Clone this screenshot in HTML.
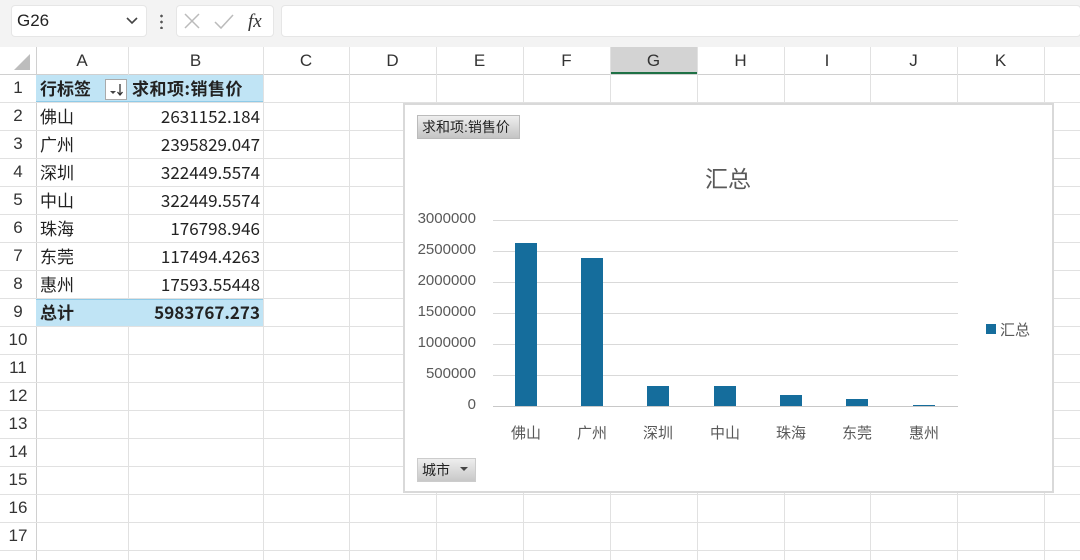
<!DOCTYPE html>
<html><head><meta charset="utf-8"><style>
*{margin:0;padding:0;box-sizing:border-box}
body{width:1080px;height:560px;overflow:hidden;background:#fff;font-family:"Liberation Sans","Noto Sans CJK SC",sans-serif;position:relative}
.a{position:absolute}
.vl{position:absolute;top:47px;bottom:0;width:1px;background:#e1e1e1}
.hl{position:absolute;left:0;right:0;height:1px;background:#e1e1e1}
.ch{position:absolute;top:47px;height:27px;font-size:17px;color:#333;text-align:center;line-height:27px}
.rn{position:absolute;left:0;width:36px;font-size:17px;color:#333;text-align:center;height:28px;line-height:28px}
.c{position:absolute;font-size:17px;color:#222;height:28px;line-height:28px;font-family:"Noto Sans CJK SC","Liberation Sans",sans-serif}
.yl{position:absolute;left:405px;width:71px;text-align:right;font-size:15px;color:#595959}
.xl{position:absolute;top:422px;width:60px;text-align:center;font-size:15px;color:#595959}
.bar{position:absolute;width:22px;background:#156d9c;bottom:154px}
.gl{position:absolute;left:493px;width:465px;height:1px;background:#d9d9d9}
</style></head><body>
<div class="a" style="left:0;top:0;width:1080px;height:47px;background:#f3f3f3"></div>
<div class="a" style="left:11px;top:5px;width:136px;height:32px;background:#fff;border-radius:4px;border:1px solid #e6e6e6"></div>
<div class="a" style="left:17px;top:11px;font-size:17px;color:#222">G26</div>
<svg class="a" style="left:125px;top:15px" width="14" height="10"><path d="M2 3l5 5 5-5" stroke="#444" stroke-width="1.6" fill="none"/></svg>
<div class="a" style="left:160px;top:13px;width:3px;height:16px;background:radial-gradient(circle,#555 1.2px,transparent 1.5px) 0 0/3px 6px"></div>
<div class="a" style="left:176px;top:5px;width:98px;height:32px;background:#fff;border-radius:4px;border:1px solid #e6e6e6"></div>
<svg class="a" style="left:183px;top:12px" width="90" height="20"><path d="M2 2l14 14M16 2L2 16" stroke="#bbb" stroke-width="1.5"/><path d="M32 10l6 6 12-13" stroke="#bbb" stroke-width="1.5" fill="none"/><text x="65" y="15" font-family="Liberation Serif" font-style="italic" font-size="19" fill="#333">fx</text></svg>
<div class="a" style="left:281px;top:5px;width:800px;height:32px;background:#fff;border-radius:4px;border:1px solid #e6e6e6"></div>
<div class="a" style="left:0;top:47px;width:1080px;height:27px;background:#fff"></div>
<div class="a" style="left:610px;top:47px;width:87px;height:27px;background:#d3d3d3;border-bottom:2px solid #1e7145"></div>
<svg class="a" style="left:10px;top:52px" width="22" height="20"><path d="M20 2V18H4Z" fill="#bdbdbd"/></svg>
<div class="hl" style="top:74px;background:#d0d0d0"></div>
<div class="vl" style="left:36px;background:#d0d0d0"></div>
<div class="vl" style="left:128px"></div><div class="vl" style="left:263px"></div><div class="vl" style="left:349px"></div><div class="vl" style="left:436px"></div><div class="vl" style="left:523px"></div><div class="vl" style="left:610px"></div><div class="vl" style="left:697px"></div><div class="vl" style="left:784px"></div><div class="vl" style="left:870px"></div><div class="vl" style="left:957px"></div><div class="vl" style="left:1044px"></div>
<div class="hl" style="top:102px"></div><div class="hl" style="top:130px"></div><div class="hl" style="top:158px"></div><div class="hl" style="top:186px"></div><div class="hl" style="top:214px"></div><div class="hl" style="top:242px"></div><div class="hl" style="top:270px"></div><div class="hl" style="top:298px"></div><div class="hl" style="top:326px"></div><div class="hl" style="top:354px"></div><div class="hl" style="top:382px"></div><div class="hl" style="top:410px"></div><div class="hl" style="top:438px"></div><div class="hl" style="top:466px"></div><div class="hl" style="top:494px"></div><div class="hl" style="top:522px"></div><div class="hl" style="top:550px"></div>
<div class="ch" style="left:36px;width:92px">A</div><div class="ch" style="left:128px;width:135px">B</div><div class="ch" style="left:263px;width:86px">C</div><div class="ch" style="left:349px;width:87px">D</div><div class="ch" style="left:436px;width:87px">E</div><div class="ch" style="left:523px;width:87px">F</div><div class="ch" style="left:610px;width:87px">G</div><div class="ch" style="left:697px;width:87px">H</div><div class="ch" style="left:784px;width:86px">I</div><div class="ch" style="left:870px;width:87px">J</div><div class="ch" style="left:957px;width:87px">K</div>
<div class="a" style="left:36px;top:75px;width:227px;height:27px;background:#c0e4f5;border-bottom:1px solid #8fcbe8"></div>
<div class="a" style="left:36px;top:299px;width:227px;height:27px;background:#c0e4f5;border-top:1px solid #8fcbe8"></div>
<div class="rn" style="top:74px">1</div><div class="rn" style="top:102px">2</div><div class="rn" style="top:130px">3</div><div class="rn" style="top:158px">4</div><div class="rn" style="top:186px">5</div><div class="rn" style="top:214px">6</div><div class="rn" style="top:242px">7</div><div class="rn" style="top:270px">8</div><div class="rn" style="top:298px">9</div><div class="rn" style="top:326px">10</div><div class="rn" style="top:354px">11</div><div class="rn" style="top:382px">12</div><div class="rn" style="top:410px">13</div><div class="rn" style="top:438px">14</div><div class="rn" style="top:466px">15</div><div class="rn" style="top:494px">16</div><div class="rn" style="top:522px">17</div>
<div class="c" style="left:40px;top:74px;font-weight:bold">行标签</div>
<svg class="a" style="left:105px;top:79px" width="22" height="21"><rect x="0.5" y="0.5" width="21" height="20" fill="#fff" stroke="#aaa"/><path d="M5 12h6l-3 3z" fill="#444"/><path d="M15 5v11M12.5 13l2.5 3 2.5-3" stroke="#333" stroke-width="1.3" fill="none"/></svg>
<div class="c" style="left:132px;top:74px;font-weight:bold;letter-spacing:0.5px">求和项:销售价</div>
<div class="c" style="left:40px;top:102px">佛山</div><div class="c" style="left:40px;top:130px">广州</div><div class="c" style="left:40px;top:158px">深圳</div><div class="c" style="left:40px;top:186px">中山</div><div class="c" style="left:40px;top:214px">珠海</div><div class="c" style="left:40px;top:242px">东莞</div><div class="c" style="left:40px;top:270px">惠州</div><div class="c" style="left:40px;top:298px;font-weight:bold">总计</div>
<div class="c" style="right:820px;top:102px">2631152.184</div><div class="c" style="right:820px;top:130px">2395829.047</div><div class="c" style="right:820px;top:158px">322449.5574</div><div class="c" style="right:820px;top:186px">322449.5574</div><div class="c" style="right:820px;top:214px">176798.946</div><div class="c" style="right:820px;top:242px">117494.4263</div><div class="c" style="right:820px;top:270px">17593.55448</div><div class="c" style="right:820px;top:298px;font-weight:bold">5983767.273</div>
<div class="a" style="left:403px;top:103px;width:651px;height:390px;background:#fff;border:2px solid #d9d9d9"></div>
<div class="a" style="left:417px;top:115px;width:103px;height:24px;background:linear-gradient(#eee,#c4c4c4);border:1px solid #bbb;font-size:14px;line-height:22px;padding-left:4px;color:#222">求和项:销售价</div>
<div class="a" style="left:680px;top:160px;width:96px;text-align:center;font-size:23px;color:#595959">汇总</div>
<div class="gl" style="top:220px"></div><div class="gl" style="top:251px"></div><div class="gl" style="top:282px"></div><div class="gl" style="top:313px"></div><div class="gl" style="top:344px"></div><div class="gl" style="top:375px"></div><div class="gl" style="top:406px;background:#c8c8c8"></div>
<div class="yl" style="top:210px">3000000</div><div class="yl" style="top:241px">2500000</div><div class="yl" style="top:272px">2000000</div><div class="yl" style="top:303px">1500000</div><div class="yl" style="top:334px">1000000</div><div class="yl" style="top:365px">500000</div><div class="yl" style="top:396px">0</div>
<div class="bar" style="left:515px;height:163px"></div><div class="bar" style="left:581px;height:148px"></div><div class="bar" style="left:647px;height:20px"></div><div class="bar" style="left:714px;height:20px"></div><div class="bar" style="left:780px;height:11px"></div><div class="bar" style="left:846px;height:7px"></div><div class="bar" style="left:913px;height:1px"></div>
<div class="xl" style="left:496px">佛山</div><div class="xl" style="left:562px">广州</div><div class="xl" style="left:628px">深圳</div><div class="xl" style="left:695px">中山</div><div class="xl" style="left:761px">珠海</div><div class="xl" style="left:827px">东莞</div><div class="xl" style="left:894px">惠州</div>
<div class="a" style="left:986px;top:324px;width:10px;height:10px;background:#156d9c"></div>
<div class="a" style="left:1000px;top:319px;font-size:15px;color:#595959">汇总</div>
<div class="a" style="left:417px;top:458px;width:59px;height:24px;background:linear-gradient(#eee,#c8c8c8);border:1px solid #ccc;font-size:14px;line-height:22px;padding-left:4px;color:#222">城市</div>
<svg class="a" style="left:460px;top:467px" width="8" height="5"><path d="M0 0h8L4 4z" fill="#444"/></svg>
</body></html>
